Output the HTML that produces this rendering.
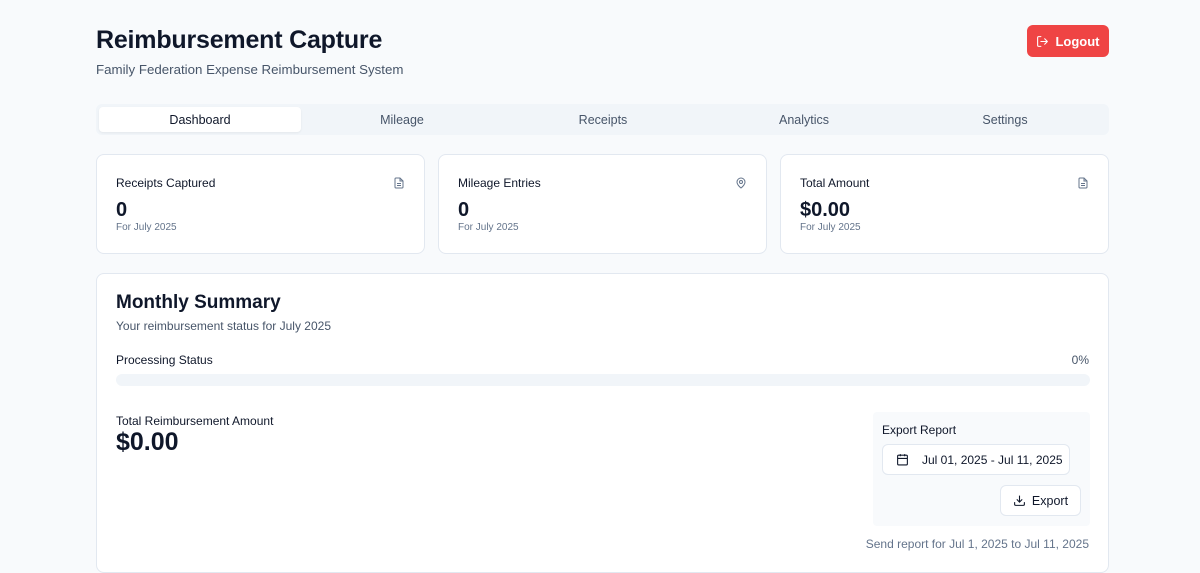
<!DOCTYPE html>
<html><head><style>
*{box-sizing:border-box;margin:0;padding:0}
body{width:1200px;height:550px;overflow:hidden;background:#f8fafc;font-family:"Liberation Sans",sans-serif;color:#0f172a;position:relative}
.a{position:absolute}
h1{position:absolute;left:96px;top:26px;font-size:25px;font-weight:700;letter-spacing:-0.2px}
.sub{left:96px;top:62px;font-size:13.3px;color:#475569}
.logout{left:1027px;top:25px;width:82px;height:32px;background:#ef4444;border-radius:6px;color:#fff;font-size:13px;font-weight:600;display:flex;align-items:center;justify-content:center;gap:6px}
.tabs{left:96px;top:104px;width:1013px;height:31px;background:#f1f5f9;border-radius:6px}
.tab{position:absolute;top:3px;height:25px;width:202px;font-size:12.5px;color:#475569;display:flex;align-items:center;justify-content:center}
.tab.on{background:#fff;color:#0f172a;border-radius:4px;box-shadow:0 1px 2px rgba(0,0,0,.06)}
.card{position:absolute;top:154px;width:329px;height:100px;background:#fff;border:1px solid #e2e8f0;border-radius:8px}
.card .t{position:absolute;left:19px;top:21px;font-size:12px}
.card .v{position:absolute;left:19px;top:44px;font-size:20px;font-weight:700}
.card .f{position:absolute;left:19px;top:67px;font-size:10px;color:#64748b}
.card svg{position:absolute;right:19px;top:22px}
.big{left:96px;top:273px;width:1013px;height:300px;background:#fff;border:1px solid #e2e8f0;border-radius:8px}
</style></head><body>
<h1>Reimbursement Capture</h1>
<div class="a sub">Family Federation Expense Reimbursement System</div>
<div class="a logout"><svg width="13" height="13" viewBox="0 0 24 24" fill="none" stroke="#fff" stroke-width="2" stroke-linecap="round" stroke-linejoin="round"><path d="M9 21H5a2 2 0 0 1-2-2V5a2 2 0 0 1 2-2h4"/><path d="M16 17l5-5-5-5M21 12H9"/></svg>Logout</div>
<div class="a tabs">
<div class="tab on" style="left:3px">Dashboard</div>
<div class="tab" style="left:205px">Mileage</div>
<div class="tab" style="left:406px">Receipts</div>
<div class="tab" style="left:607px">Analytics</div>
<div class="tab" style="left:808px">Settings</div>
</div>
<div class="card" style="left:96px"><div class="t">Receipts Captured</div><svg width="12" height="12" viewBox="0 0 24 24" fill="none" stroke="#64748b" stroke-width="2"><path d="M14 2H6a2 2 0 0 0-2 2v16a2 2 0 0 0 2 2h12a2 2 0 0 0 2-2V8z"/><path d="M14 2v6h6M16 13H8M16 17H8"/></svg><div class="v">0</div><div class="f">For July 2025</div></div>
<div class="card" style="left:438px"><div class="t">Mileage Entries</div><svg width="12" height="12" viewBox="0 0 24 24" fill="none" stroke="#64748b" stroke-width="2"><path d="M20 10c0 6-8 12-8 12s-8-6-8-12a8 8 0 0 1 16 0z"/><circle cx="12" cy="10" r="3"/></svg><div class="v">0</div><div class="f">For July 2025</div></div>
<div class="card" style="left:780px"><div class="t">Total Amount</div><svg width="12" height="12" viewBox="0 0 24 24" fill="none" stroke="#64748b" stroke-width="2"><path d="M14 2H6a2 2 0 0 0-2 2v16a2 2 0 0 0 2 2h12a2 2 0 0 0 2-2V8z"/><path d="M14 2v6h6M16 13H8M16 17H8"/></svg><div class="v">$0.00</div><div class="f">For July 2025</div></div>
<div class="a big">
<div class="a" style="left:19px;top:18px;font-size:19px;font-weight:700">Monthly Summary</div>
<div class="a" style="left:19px;top:45px;font-size:12px;color:#475569">Your reimbursement status for July 2025</div>
<div class="a" style="left:19px;top:79px;font-size:12px">Processing Status</div>
<div class="a" style="right:19px;top:79px;font-size:12px;color:#475569">0%</div>
<div class="a" style="left:19px;top:100px;width:974px;height:12px;background:#f1f5f9;border-radius:6px"></div>
<div class="a" style="left:19px;top:140px;font-size:12px">Total Reimbursement Amount</div>
<div class="a" style="left:19px;top:154px;font-size:25px;font-weight:700">$0.00</div>
<div class="a" style="left:776px;top:138px;width:217px;height:114px;background:#f8fafc;border-radius:4px">
<div class="a" style="left:9px;top:11px;font-size:12px">Export Report</div>
<div class="a" style="left:9px;top:32px;width:188px;height:31px;background:#fff;border:1px solid #e2e8f0;border-radius:6px;font-size:12px;display:flex;align-items:center"><svg style="margin-left:13px;margin-right:13px" width="13" height="13" viewBox="0 0 24 24" fill="none" stroke="#0f172a" stroke-width="2"><rect x="3" y="4" width="18" height="18" rx="2"/><path d="M16 2v4M8 2v4M3 10h18"/></svg>Jul 01, 2025 - Jul 11, 2025</div>
<div class="a" style="left:127px;top:73px;width:81px;height:31px;background:#fff;border:1px solid #e2e8f0;border-radius:6px;font-size:12.5px;display:flex;align-items:center;justify-content:center;gap:6px"><svg width="13" height="13" viewBox="0 0 24 24" fill="none" stroke="#0f172a" stroke-width="2"><path d="M21 15v4a2 2 0 0 1-2 2H5a2 2 0 0 1-2-2v-4M7 10l5 5 5-5M12 15V3"/></svg>Export</div>
</div>
<div class="a" style="right:19px;top:263px;font-size:12px;color:#64748b">Send report for Jul 1, 2025 to Jul 11, 2025</div>
</div>
</body></html>
